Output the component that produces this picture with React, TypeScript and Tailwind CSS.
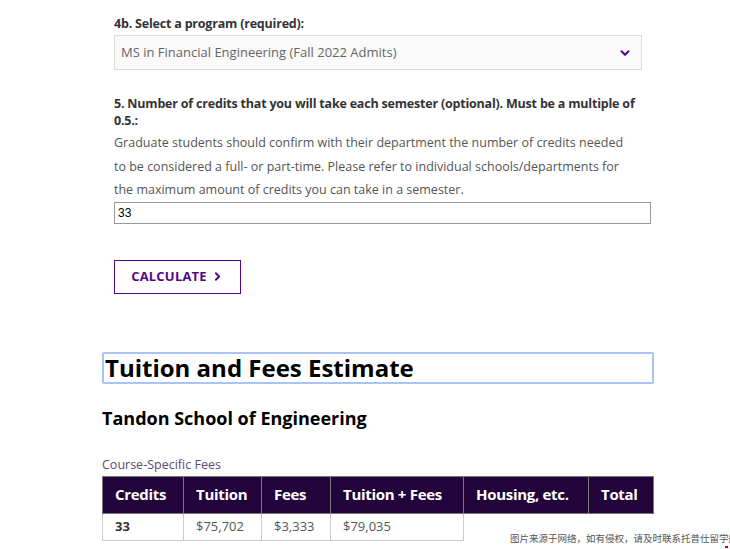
import { ChevronDown, ChevronRight } from "lucide-react";

const font = { fontFamily: '"Open Sans", "Liberation Sans", sans-serif' };

const headers = ["Credits", "Tuition", "Fees", "Tuition + Fees", "Housing, etc.", "Total"];
const widths = ["w-[81px]", "w-[78px]", "w-[69px]", "w-[133px]", "w-[125px]", "w-[65px]"];
const row = ["33", "$75,702", "$3,333", "$79,035"];

export default function App() {
  return (
    <div className="relative h-[549px] w-[730px] overflow-hidden bg-white text-[#333]" style={font}>
      <div className="ml-[102px] w-[552px]">
        <div className="pl-3 pt-[15px]">
          <p className="text-[12.5px] font-bold leading-[18px] tracking-[-0.2px] text-[#333]">
            4b. Select a program (required):
          </p>
          <div className="mt-[2px] flex h-[35px] w-[528px] items-center justify-between border border-[#ddd] bg-[#fafafa] pl-[6px] pr-[9px]">
            <span className="text-[13px] text-[#666]">MS in Financial Engineering (Fall 2022 Admits)</span>
            <ChevronDown className="h-[14px] w-[14px] text-[#57068c]" strokeWidth={3.5} />
          </div>

          <p className="mt-[25px] w-[530px] text-[12.5px] font-bold leading-[17px] tracking-[-0.2px] text-[#333]">
            5. Number of credits that you will take each semester (optional). Must be a multiple of 0.5.:
          </p>
          <p className="mt-[2px] text-[12.5px] leading-[23.5px] text-[#555]">
            Graduate students should confirm with their department the number of credits needed
            <br />
            to be considered a full- or part-time. Please refer to individual schools/departments for
            <br />
            the maximum amount of credits you can take in a semester.
          </p>
          <div
            className="flex h-[22px] w-[537px] items-center border border-[#999] pl-[3px] text-[12px] text-black"
            style={{ fontFamily: '"Liberation Sans", Arial, sans-serif' }}
          >
            33
          </div>

          <button className="mt-[36px] flex h-[34px] w-[127px] items-center justify-center gap-[4px] border border-[#57068c] text-[13px] font-bold tracking-[0.2px] text-[#57068c]">
            CALCULATE
            <ChevronRight className="h-[13px] w-[13px]" strokeWidth={3.5} />
          </button>
        </div>

        <h2 className="mt-[58px] flex h-[32px] items-center rounded-[2px] border-2 border-[#a8c4fa] pl-[1px] text-[24px] font-bold text-black">
          Tuition and Fees Estimate
        </h2>
        <h3 className="mt-[22px] text-[18px] font-bold leading-[24px] text-black">Tandon School of Engineering</h3>
        <p className="mt-[27px] text-[12.5px] leading-[16px] text-[#5b4a73]">Course-Specific Fees</p>

        <table className="mt-[3px] border-collapse text-left">
          <thead>
            <tr className="h-[37px] bg-[#22033a]">
              {headers.map((h, i) => (
                <th
                  key={h}
                  className={`${widths[i]} border border-[#777] px-3 text-[15px] font-bold tracking-[-0.3px] text-white`}
                >
                  {h}
                </th>
              ))}
            </tr>
          </thead>
          <tbody>
            <tr className="h-[27px]">
              {row.map((c, i) => (
                <td
                  key={c}
                  className={`border border-[#ccc] px-3 text-[13px] ${i === 0 ? "font-bold text-[#333]" : "text-[#555]"}`}
                >
                  {c}
                </td>
              ))}
            </tr>
          </tbody>
        </table>
      </div>

      <div
        className="absolute left-[510px] top-[531px] whitespace-nowrap text-[9.5px] text-[#555]"
        style={{ fontFamily: '"Noto Sans CJK SC", sans-serif' }}
      >
        图片来源于网络，如有侵权，请及时联系托普仕留学删除
      </div>
      <div className="absolute right-[2px] bottom-[1px] h-[2px] w-[3px] bg-[#c00]" />
    </div>
  );
}
